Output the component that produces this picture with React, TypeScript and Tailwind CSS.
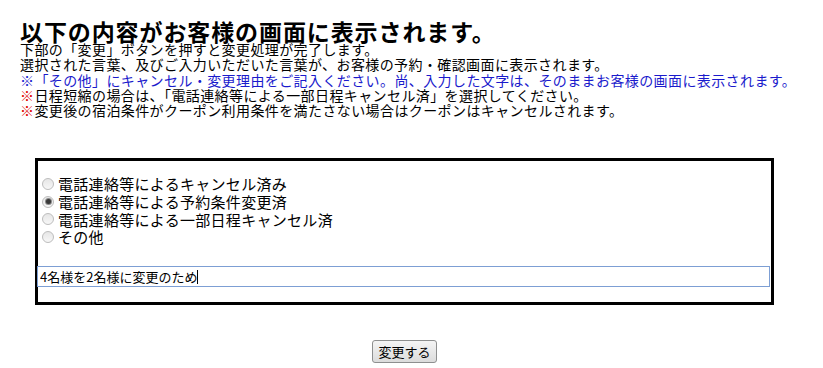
import React, { useState } from 'react';

const reasons = [
  '電話連絡等によるキャンセル済み',
  '電話連絡等による予約条件変更済',
  '電話連絡等による一部日程キャンセル済',
  'その他',
];

const Radio: React.FC<{ checked: boolean }> = ({ checked }) => (
  <span className="w-[12px] h-[12px] shrink-0 rounded-full border border-[#bdbdbd] bg-gradient-to-b from-[#e6e6e6] to-[#f7f7f7] flex items-center justify-center">
    {checked && <span className="w-[5px] h-[5px] rounded-full bg-[#3a3a3a] ring-1 ring-[#8a8a8a]" />}
  </span>
);

const App: React.FC = () => {
  const [selected, setSelected] = useState(1);
  const [memo, setMemo] = useState('4名様を2名様に変更のため');

  return (
    <div className="min-h-[368px] bg-white pl-[20px] pt-[20px] text-black font-['Noto_Sans_CJK_JP','Noto_Sans',sans-serif]">
      <h1 className="text-[23px] leading-[22px] font-bold tracking-[0.9px]">以下の内容がお客様の画面に表示されます。</h1>

      {/* Notes */}
      <div className="text-[14px] leading-[15.3px] tracking-[0.4px]">
        <p>下部の「変更」ボタンを押すと変更処理が完了します。</p>
        <p>選択された言葉、及びご入力いただいた言葉が、お客様の予約・確認画面に表示されます。</p>
        <p className="text-[#1a1acc]">※「その他」にキャンセル・変更理由をご記入ください。尚、入力した文字は、そのままお客様の画面に表示されます。</p>
        <p><span className="text-[#e00000]">※</span>日程短縮の場合は、「電話連絡等による一部日程キャンセル済」を選択してください。</p>
        <p><span className="text-[#e00000]">※</span>変更後の宿泊条件がクーポン利用条件を満たさない場合はクーポンはキャンセルされます。</p>
      </div>

      <div className="ml-[15px] w-[739px]">
        {/* Reason box */}
        <div className="mt-[40px] h-[147px] border-[3px] border-black pt-[14px] pb-[15px] flex flex-col">
          <div className="flex flex-col text-[15px] leading-[17.6px] tracking-[0.3px]">
            {reasons.map((r, i) => (
              <label key={r} className="flex items-center gap-[4px] pl-[4px] cursor-pointer" onClick={() => setSelected(i)}>
                <Radio checked={selected === i} />
                <span>{r}</span>
              </label>
            ))}
          </div>
          <div className="mt-auto -ml-[1px] pr-[1px]">
            <div className="h-[21px] border border-[#7d9fd4] flex items-center pl-[2px] text-[13px]">
              <input
                value={memo}
                onChange={(e) => setMemo(e.target.value)}
                className="w-[158px] outline-none bg-transparent p-0 font-['Noto_Sans_CJK_JP',sans-serif]"
              />
              <span className="w-[1px] h-[14px] bg-black -ml-[1px]" />
            </div>
          </div>
        </div>

        {/* Submit */}
        <div className="flex justify-center mt-[35px]">
          <button className="h-[23px] w-[65px] rounded-[3px] border border-[#8e8f8f] bg-gradient-to-b from-[#f4f4f4] to-[#dcdcdc] text-[13px] leading-none">
            変更する
          </button>
        </div>
      </div>
    </div>
  );
};

export default App;
